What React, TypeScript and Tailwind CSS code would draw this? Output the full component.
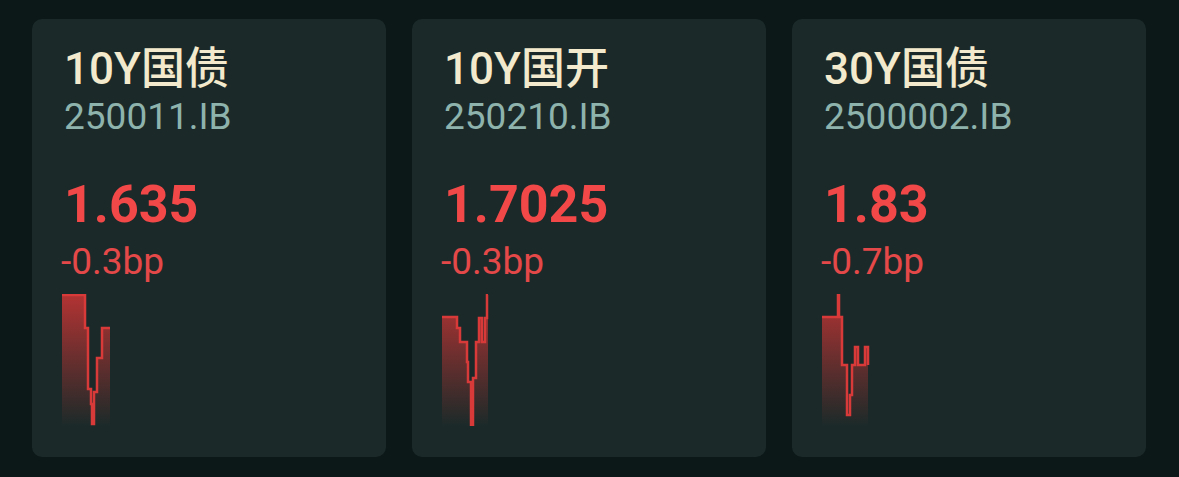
type Pt = [number, number];

interface Bond {
  name: string;
  code: string;
  price: string;
  change: string;
  points: Pt[];
}

const bonds: Bond[] = [
  {
    name: '10Y国债',
    code: '250011.IB',
    price: '1.635',
    change: '-0.3bp',
    points: [[0, 1], [23, 1], [23, 34], [26, 34], [26, 95], [29, 95], [29, 110], [30, 110], [30, 130], [32, 130], [32, 98], [35, 98], [35, 64], [40, 64], [40, 34], [48, 34]],
  },
  {
    name: '10Y国开',
    code: '250210.IB',
    price: '1.7025',
    change: '-0.3bp',
    points: [[0, 23], [15, 23], [15, 34], [18, 34], [18, 48], [25, 48], [25, 68], [26, 68], [26, 88], [29, 88], [29, 131], [31, 131], [31, 84], [34, 84], [34, 48], [37, 48], [37, 24], [40, 24], [40, 48], [43, 48], [43, 24], [45, 24], [45, 1], [46, 1]],
  },
  {
    name: '30Y国债',
    code: '2500002.IB',
    price: '1.83',
    change: '-0.7bp',
    points: [[0, 23], [16, 23], [16, 1], [17, 1], [17, 23], [20, 23], [20, 71], [25, 71], [25, 121], [28, 121], [28, 101], [30, 101], [30, 71], [33, 71], [33, 53], [36, 53], [36, 71], [43, 71], [43, 53], [46, 53], [46, 71]],
  },
];

const Sparkline = ({ points, id }: { points: Pt[]; id: string }) => {
  const line = points.map(([x, y]) => `${x},${y}`).join(' ');
  const last = points[points.length - 1];
  const area = `0,132 ${line} ${last[0]},132`;
  return (
    <svg width="50" height="132" viewBox="0 0 50 132" className="block">
      <defs>
        <linearGradient id={id} x1="0" y1="0" x2="0" y2="1">
          <stop offset="0%" stopColor="#c43434" stopOpacity="0.9" />
          <stop offset="100%" stopColor="#c43434" stopOpacity="0" />
        </linearGradient>
      </defs>
      <polygon points={area} fill={`url(#${id})`} />
      <polyline points={line} fill="none" stroke="#d83a3a" strokeWidth="2.5" />
    </svg>
  );
};

export default function App() {
  return (
    <div
      className="w-[1179px] h-[477px] bg-[#0c1717] flex gap-[26px] pl-[32px] pt-[19px]"
      style={{ fontFamily: 'Roboto, "Noto Sans CJK SC", sans-serif' }}
    >
      {bonds.map((b, i) => (
        <div key={b.code} className="w-[354px] h-[438px] rounded-[10px] bg-[#1b2a29] pl-[32px] pt-[25px] flex flex-col">
          <div className="text-[44px] leading-[50px] font-medium text-[#f3e9cc]">{b.name}</div>
          <div className="text-[37px] leading-[42px] mt-[2px] text-[#8eb3ad]">{b.code}</div>
          <div className="text-[52px] leading-[60px] mt-[37px] font-bold text-[#f24848]">{b.price}</div>
          <div className="text-[37px] leading-[40px] mt-[7px] -ml-[3px] text-[#e54848]">{b.change}</div>
          <div className="mt-[12px] -ml-[2px]">
            <Sparkline points={b.points} id={`g${i}`} />
          </div>
        </div>
      ))}
    </div>
  );
}
